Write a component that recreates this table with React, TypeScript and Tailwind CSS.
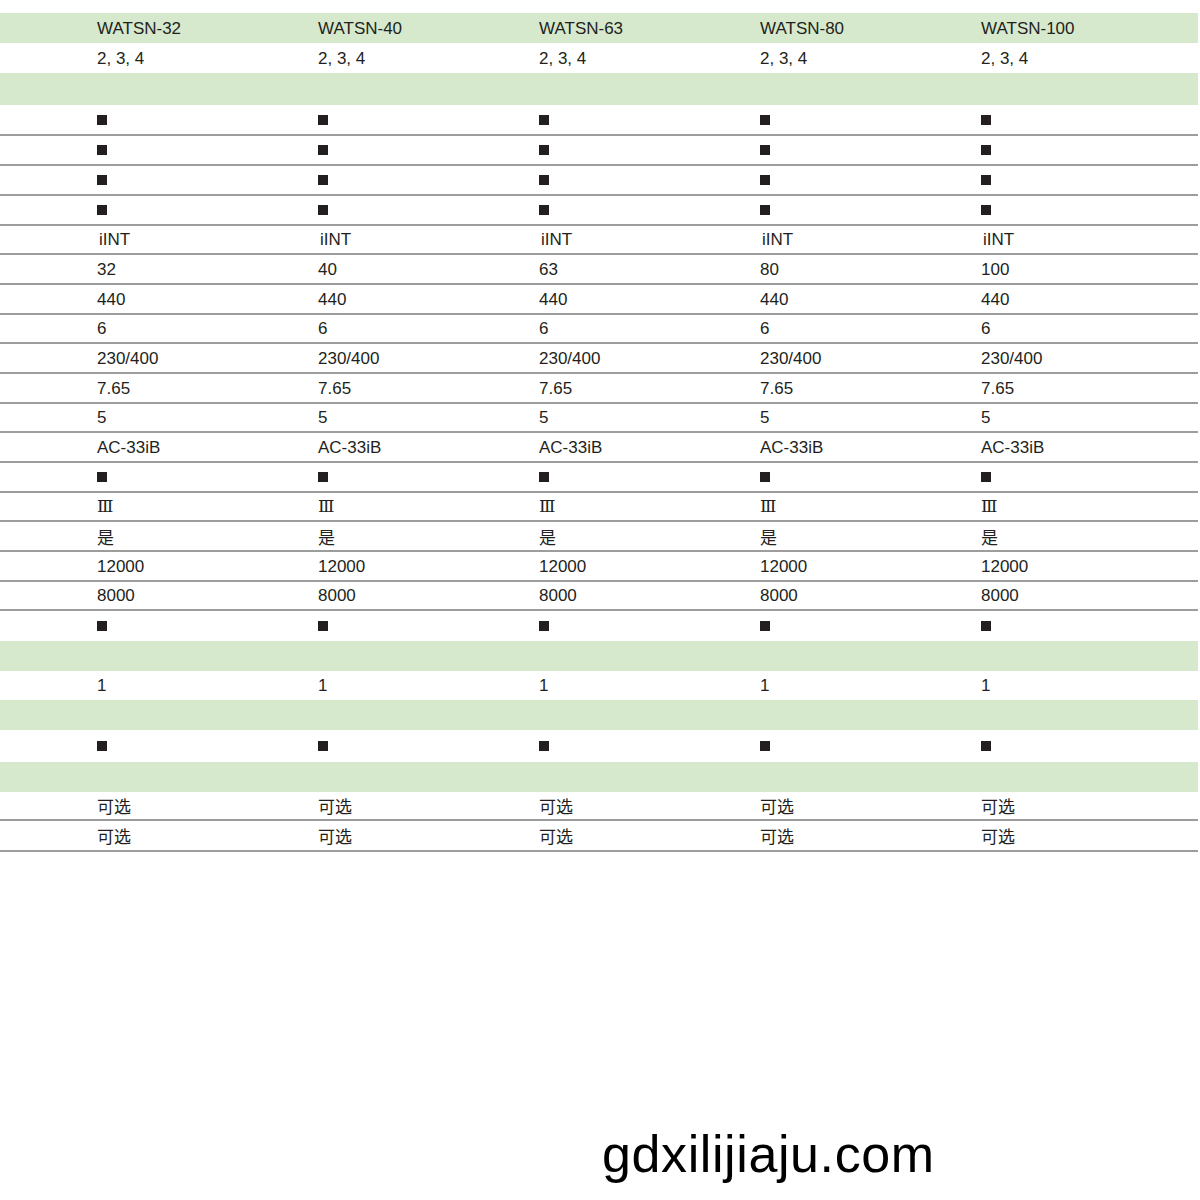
import React from "react";

type Cell = string | null; // null = black square marker

interface Row {
  green?: boolean;
  h: number;
  line?: boolean;
  value?: Cell;
  font?: "cjk" | "serif";
  indent?: boolean;
}

const MODELS = ["WATSN-32", "WATSN-40", "WATSN-63", "WATSN-80", "WATSN-100"];

// one value for every column unless given per column
const ROWS: (Row & { values?: string[] })[] = [
  { green: true, h: 30, values: MODELS },
  { h: 30, value: "2, 3, 4" },
  { green: true, h: 32 },
  { h: 31, value: null, line: true },
  { h: 30, value: null, line: true },
  { h: 30, value: null, line: true },
  { h: 30, value: null, line: true },
  { h: 29, value: "iINT", line: true, indent: true },
  { h: 30, values: ["32", "40", "63", "80", "100"], line: true },
  { h: 30, value: "440", line: true },
  { h: 29, value: "6", line: true },
  { h: 30, value: "230/400", line: true },
  { h: 30, value: "7.65", line: true },
  { h: 29, value: "5", line: true },
  { h: 30, value: "AC-33iB", line: true },
  { h: 30, value: null, line: true },
  { h: 29, value: "Ⅲ", line: true, font: "serif" },
  { h: 30, value: "是", line: true, font: "cjk" },
  { h: 30, value: "12000", line: true },
  { h: 29, value: "8000", line: true },
  { h: 30, value: null },
  { green: true, h: 30 },
  { h: 29, value: "1" },
  { green: true, h: 30 },
  { h: 32, value: null },
  { green: true, h: 30 },
  { h: 29, value: "可选", line: true, font: "cjk" },
  { h: 31, value: "可选", line: true, font: "cjk" },
];

function Marker() {
  return <span className="inline-block w-[10px] h-[10px] bg-[#231f20]" />;
}

function fontClass(f?: "cjk" | "serif") {
  if (f === "cjk") return "font-['Noto_Sans_CJK_SC',sans-serif] text-[17px]";
  if (f === "serif") return "font-['DejaVu_Serif','Liberation_Serif',serif] text-[17px]";
  return "font-['Liberation_Sans',Arial,sans-serif] text-[17px]";
}

function SpecRow({ row }: { row: Row & { values?: string[] } }) {
  const cells: Cell[] | null = row.values
    ? row.values
    : row.value !== undefined
      ? MODELS.map(() => row.value as Cell)
      : null;
  return (
    <div
      className={
        "grid grid-cols-[97px_221px_221px_221px_221px_1fr] items-center " +
        (row.green ? "bg-[#d6e9cc] " : "bg-white ") +
        (row.line ? "border-b-2 border-[#9d9d9d]" : "")
      }
      style={{ height: row.h }}
    >
      <div />
      {cells &&
        cells.map((c, i) => (
          <div
            key={i}
            className={
              "flex items-center leading-none " +
              (row.indent ? "pl-[2px] " : "") +
              fontClass(row.font)
            }
          >
            {c === null ? <Marker /> : c}
          </div>
        ))}
    </div>
  );
}

export default function App() {
  return (
    <div className="w-[1200px] h-[1200px] bg-white text-[#231f20] pt-[13px]">
      <div className="w-[1198px]">
        {ROWS.map((r, i) => (
          <SpecRow key={i} row={r} />
        ))}
      </div>
      <div className="mt-[276px] pl-[602px] font-['Liberation_Sans',Arial,sans-serif] text-[52px] leading-none text-black tracking-[0.6px]">
        gdxilijiaju.com
      </div>
    </div>
  );
}
